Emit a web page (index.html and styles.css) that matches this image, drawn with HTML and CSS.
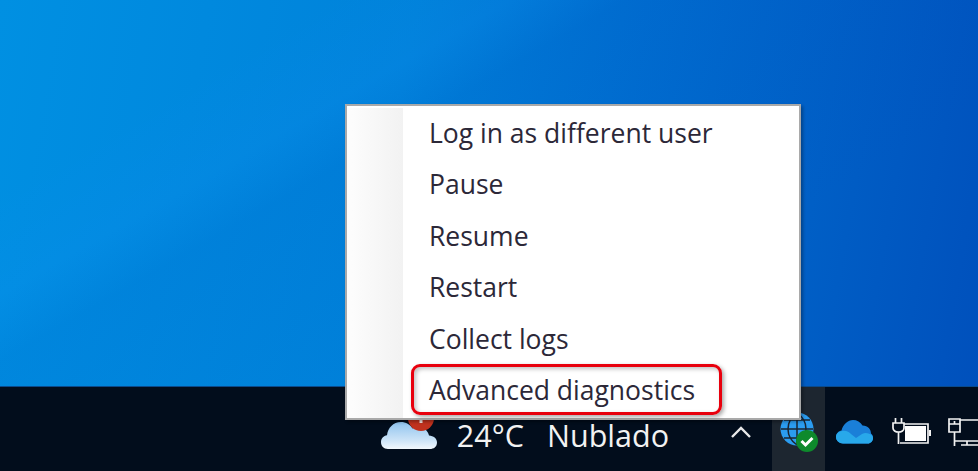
FILE: index.html
```html
<!DOCTYPE html>
<html lang="en">
<head>
    <meta charset="UTF-8" />
    <title>Tray menu</title>
    <link rel="stylesheet" href="styles.css">
</head>
<body>
    <div class="desktop"></div>

    <div class="taskbar">
        <div class="weather">
            <svg class="weather-icon" width="58" height="44" viewBox="0 0 58 44">
                <defs>
                    <linearGradient id="cloudFill" x1="0" y1="0" x2="0" y2="1">
                        <stop offset="0" stop-color="#8fc3ee" />
                        <stop offset="0.7" stop-color="#cfe5f8" />
                        <stop offset="1" stop-color="#f2f8fd" />
                    </linearGradient>
                </defs>
                <path d="M8 43c-4.500 0-7-3-7-7 0-3.500 2.500-6.300 6-6.800C8 22 13 16 21 16c5 0 9 2.500 11.500 6.500 1.500-.8 3.500-1.300 5.500-1.300 6 0 10 3.500 11 8.300 4.500.3 8 3 8 7 0 4.500-3.500 6.500-7 6.500z" fill="url(#cloudFill)" />
                <circle cx="41" cy="12" r="13" fill="#c0321e" />
                <rect x="39.500" y="8" width="3" height="9" fill="#f4e4df" />
            </svg>
            <span class="temp">24°C</span>
            <span class="sky">Nublado</span>
        </div>
        <div class="tray">
            <svg class="chevron" width="22" height="14" viewBox="0 0 22 14">
                <path d="M2 12l9-9 9 9" fill="none" stroke="#e8e8e8" stroke-width="2.400" />
            </svg>
            <div class="tray-active">
                <svg width="42" height="44" viewBox="0 0 42 44">
                    <circle cx="19" cy="18" r="16.500" fill="#2b9cf0" />
                    <path d="M19 2v32M3 18h32M6 9h26M6 27h26M19 2c-12 8-12 24 0 32M19 2c12 8 12 24 0 32" fill="none" stroke="#1b2430" stroke-width="1.500" />
                    <circle cx="29" cy="30" r="11" fill="#0e8a2c" />
                    <path d="M23.500 30l4 4 7-7" fill="none" stroke="#fff" stroke-width="3" />
                </svg>
            </div>
            <svg class="onedrive" width="38" height="25" viewBox="0 0 38 25">
                <path d="M8 24.500c-4 0-7-3-7-6.500C1 14.500 3.500 12 6.500 11.500 8 5.500 13 1 18 1c4 0 7.500 2 9.500 5.500C33 6.500 36 10.500 36 14.500c2 1.500 2 3.500 2 4.500 0 3-2.500 5.500-5 5.500z" fill="#1a7fd8" />
                <path d="M8 24.500c-4 0-7-3-7-6.500 0-3 2.500-5.500 6-6 4-1 7 1 9 3l5 4 6-4c3-1.500 6-1 9 .5 2 1.500 2 3 2 4 0 2.500-2.500 5-5 5z" fill="#28a8ea" />
            </svg>
            <svg class="power" width="40" height="27" viewBox="0 0 40 27">
                <path d="M3.500 0v5M9.500 0v5M1 5h11v5c0 2.500-2.500 4-5.500 4S1 12.500 1 10zM6.500 14v12" fill="none" stroke="#f2f2f2" stroke-width="1.700" />
                <path d="M12 6h24v19H8" fill="none" stroke="#f2f2f2" stroke-width="1.700" />
                <rect x="13" y="8" width="21" height="15" fill="#fff" />
                <rect x="37" y="12" width="2" height="6" fill="#f2f2f2" />
            </svg>
            <svg class="network" width="32" height="28" viewBox="0 0 32 28">
                <path d="M1 1h11v13H1zM1 6h11M6.500 3v3M6.500 14v14M6.500 23h26M12 2h20M19 23v4M13 27h19" fill="none" stroke="#f2f2f2" stroke-width="1.700" />
            </svg>
        </div>
    </div>

    <div class="menu">
        <div class="menu-gutter"></div>
        <ul class="menu-list">
            <li>Log in as different user</li>
            <li>Pause</li>
            <li>Resume</li>
            <li>Restart</li>
            <li>Collect logs</li>
            <li class="marked">Advanced diagnostics</li>
        </ul>
    </div>
</body>
</html>
```

FILE: styles.css
```css
html, body {
    margin: 0;
    padding: 0;
    height: 471px;
    overflow: hidden;
}

body {
    position: relative;
    display: flex;
    flex-direction: column;
    font-family: "Open Sans", "Noto Sans", sans-serif;
}

.desktop {
    flex: 1;
    background:
        linear-gradient(150deg, rgba(30, 150, 255, 0) 20%, rgba(30, 140, 255, 0.1) 31%, rgba(0, 70, 190, 0.1) 38%, rgba(0, 70, 190, 0) 72%),
        linear-gradient(100deg, #0090e2 0%, #0082da 40%, #006ed0 62%, #0050bc 100%);
}

.taskbar {
    height: 85px;
    flex-shrink: 0;
    background: #020d1c;
    border-top: 1px solid #0a4a8c;
    box-sizing: border-box;
    display: flex;
    justify-content: flex-end;
    align-items: stretch;
    color: #f2f2f2;
}

.weather {
    display: flex;
    align-items: center;
    padding-top: 12px;
    margin-right: 61px;
    font-size: 30.5px;
}

.weather-icon {
    margin-top: -14px;
    margin-right: 19px;
}

.temp {
    margin-right: 23px;
}

.tray {
    display: flex;
    align-items: center;
    padding-top: 5px;
    width: 248px;
    flex-shrink: 0;
    box-sizing: border-box;
    overflow: hidden;
}

.chevron {
    margin-right: 20px;
    flex-shrink: 0;
}

.tray-active {
    width: 53px;
    height: 84px;
    margin-top: -5px;
    background: #1d2630;
    display: flex;
    align-items: flex-end;
    justify-content: center;
    flex-shrink: 0;
}

.tray-active svg {
    margin-bottom: 16px;
}

.onedrive {
    margin-left: 10px;
    flex-shrink: 0;
}

.power {
    margin-left: 19px;
    flex-shrink: 0;
}

.network {
    margin-left: 16px;
    flex-shrink: 0;
}

.menu {
    position: absolute;
    left: 345px;
    top: 104px;
    width: 456px;
    height: 316px;
    box-sizing: border-box;
    display: flex;
    background: #fff;
    border: 2px solid #a9a9a9;
    box-shadow: 2px 2px 3px rgba(0, 0, 0, 0.3);
}

.menu-gutter {
    width: 56px;
    margin-top: 2px;
    background: linear-gradient(90deg, #fdfdfd, #f2f2f2);
}

.menu-list {
    list-style: none;
    margin: 0;
    padding: 2px 0 0 26px;
    font-size: 26.5px;
    color: #2c2838;
}

.menu-list li {
    height: 51.4px;
    line-height: 51.4px;
    white-space: nowrap;
    position: relative;
}

.marked::after {
    content: "";
    position: absolute;
    left: -18px;
    top: -1px;
    width: 305px;
    height: 45px;
    border: 3px solid #e8000d;
    border-radius: 9px;
    box-shadow: 2px 2px 4px rgba(0, 0, 0, 0.35), inset 2px 2px 4px rgba(0, 0, 0, 0.25);
}
```
